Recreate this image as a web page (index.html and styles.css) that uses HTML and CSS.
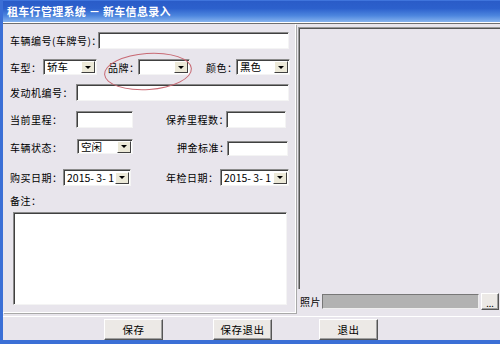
FILE: index.html
```html
<!DOCTYPE html>
<html>
<head>
    <meta charset="UTF-8">
    <title>新车信息录入</title>
    <link rel="stylesheet" href="styles.css">
</head>
<body>
    <div class="window">
        <div class="titlebar">租车行管理系统 － 新车信息录入</div>
        <div class="client">
            <div class="content">
                <div class="form-panel">
                    <div class="row row1">
                        <label class="w-plate">车辆编号(车牌号)：</label>
                        <div class="field w-191"></div>
                    </div>
                    <div class="row row2">
                        <label class="w-33">车型：</label>
                        <div class="combo w-54"><span>轿车</span><i class="arrow"></i></div>
                        <label class="w-30 ml-11">品牌：</label>
                        <div class="combo w-52"><span></span><i class="arrow"></i></div>
                        <label class="w-30 ml-16">颜色：</label>
                        <div class="combo w-54"><span>黑色</span><i class="arrow"></i></div>
                    </div>
                    <div class="row row3">
                        <label class="w-66">发动机编号：</label>
                        <div class="field w-213"></div>
                    </div>
                    <div class="row row4">
                        <label class="w-66">当前里程：</label>
                        <div class="field w-57"></div>
                        <label class="w-60 ml-33">保养里程数：</label>
                        <div class="field w-60"></div>
                    </div>
                    <div class="row row5">
                        <label class="w-67">车辆状态：</label>
                        <div class="combo w-56 up"><span>空闲</span><i class="arrow"></i></div>
                        <label class="w-50 ml-44">押金标准：</label>
                        <div class="field w-61 down"></div>
                    </div>
                    <div class="row row6">
                        <label class="w-53">购买日期：</label>
                        <div class="combo w-68"><span>2015- 3- 1</span><i class="arrow"></i></div>
                        <label class="w-54 ml-35">年检日期：</label>
                        <div class="combo w-69"><span>2015- 3- 1</span><i class="arrow"></i></div>
                    </div>
                    <div class="memo-label">备注：</div>
                    <div class="memo"></div>
                    <div class="highlight"></div>
                </div>
                <div class="photo-panel">
                    <div class="photo-box"></div>
                    <div class="photo-row">
                        <span class="photo-label">照片</span>
                        <div class="path"></div>
                        <div class="btn browse">...</div>
                    </div>
                </div>
            </div>
            <div class="button-bar">
                <div class="btn action">保存</div>
                <div class="btn action">保存退出</div>
                <div class="btn action">退出</div>
            </div>
        </div>
    </div>
</body>
</html>
```

FILE: styles.css
```css
body {
    margin: 0;
    font-family: "Noto Sans CJK SC", "DejaVu Sans", sans-serif;
    font-size: 10px;
    color: #000;
}
.window {
    width: 500px;
    height: 344px;
    overflow: hidden;
    background: #e8e5ec;
    border-left: 3px solid #3b6fd6;
    border-bottom: 4px solid #3b6fd6;
    box-sizing: border-box;
}
.titlebar {
    height: 22px;
    line-height: 21px;
    margin-left: -3px;
    padding-left: 7px;
    color: #fff;
    font-weight: bold;
    font-size: 11px;
    letter-spacing: 0.3px;
    background: linear-gradient(#2a5cc8 0%, #2c60cc 35%, #4d86de 70%, #86b3ee 100%);
    border-top: 1px solid #3f74dc;
    box-sizing: border-box;
}
.client {
    border-top: 1px solid #fff;
}
.content {
    display: flex;
    height: 293px;
    border-top: 1px solid #6e6e6e;
    box-sizing: border-box;
}
.form-panel {
    position: relative;
    flex: none;
    width: 293px;
    border-right: 1px solid #fff;
    border-bottom: 1px solid #fff;
    box-shadow: 1px 1px 0 #a8a8a8;
    margin-bottom: 3px;
    box-sizing: border-box;
    padding-left: 7px;
}
.row {
    display: flex;
    align-items: center;
}
.row label {
    flex: none;
    white-space: nowrap;
    letter-spacing: 0.5px;
}
.row1 { margin-top: 8px; height: 17px; }
.row2 { margin-top: 10px; height: 16px; }
.row3 { margin-top: 9px; height: 16px; }
.row4 { margin-top: 11px; height: 17px; }
.row5 { margin-top: 11px; height: 17px; }
.row6 { margin-top: 13px; height: 17px; }

.w-plate { width: 88px; }
.w-30 { width: 30px; }
.w-33 { width: 33px; }
.w-50 { width: 50px; }
.w-52 { width: 52px; }
.w-53 { width: 53px; }
.w-54 { width: 54px; }
.w-56 { width: 56px; }
.w-57 { width: 57px; }
.w-60 { width: 60px; }
.w-61 { width: 61px; }
.w-66 { width: 66px; }
.w-67 { width: 67px; }
.w-68 { width: 68px; }
.w-69 { width: 69px; }
.w-191 { width: 191px; }
.w-213 { width: 213px; }
.ml-11 { margin-left: 11px; }
.ml-16 { margin-left: 16px; }
.ml-33 { margin-left: 33px; }
.ml-35 { margin-left: 35px; }
.ml-44 { margin-left: 44px; }

.field, .combo, .memo {
    flex: none;
    box-sizing: border-box;
    background: #fff;
    border-top: 1px solid #8a8a8a;
    border-left: 1px solid #8a8a8a;
    border-right: 1px solid #f4f4f4;
    border-bottom: 1px solid #f4f4f4;
    box-shadow: inset 1px 1px 0 #404040;
}
.field { height: 17px; }
.combo {
    height: 16px;
    display: flex;
    align-items: center;
    justify-content: space-between;
    padding: 0 1px 0 3px;
}
.row6 .combo { height: 17px; }
.combo span {
    font-size: 10.5px;
    line-height: 14px;
    white-space: nowrap;
}
.up { align-self: flex-start; height: 15px; }
.down { align-self: flex-end; height: 15px; }
.arrow {
    width: 14px;
    height: 12px;
    box-sizing: border-box;
    background: #ece9d8;
    border-top: 1px solid #fff;
    border-left: 1px solid #fff;
    border-right: 1px solid #404040;
    border-bottom: 1px solid #404040;
    display: flex;
    align-items: center;
    justify-content: center;
}
.arrow::after {
    content: "";
    border-left: 3px solid transparent;
    border-right: 3px solid transparent;
    border-top: 3px solid #000;
}
.memo-label {
    margin-top: 9px;
    height: 12px;
    line-height: 12px;
    letter-spacing: 0.5px;
}
.memo {
    margin-top: 5px;
    margin-left: 3px;
    width: 274px;
    height: 93px;
}
.highlight {
    position: absolute;
    left: 101px;
    top: 29px;
    width: 86px;
    height: 35px;
    border: 1px solid #c86a74;
    border-radius: 50%;
    transform: rotate(-4deg);
}

.photo-panel {
    flex: none;
    width: 210px;
    margin-left: 2px;
}
.photo-box {
    margin-top: 3px;
    height: 262px;
    box-sizing: border-box;
    border-top: 1px solid #9a9a9a;
    border-left: 1px solid #9a9a9a;
    box-shadow: inset 1px 1px 0 #555;
}
.photo-row {
    display: flex;
    align-items: center;
    margin-top: 4px;
    height: 17px;
}
.photo-label {
    width: 24px;
    padding-left: 2px;
    box-sizing: border-box;
    letter-spacing: 0.5px;
}
.path {
    width: 157px;
    height: 15px;
    box-sizing: border-box;
    background: #b2b2b2;
    border-top: 1px solid #777;
    border-left: 1px solid #777;
    border-right: 1px solid #eee;
    border-bottom: 1px solid #eee;
}
.btn {
    box-sizing: border-box;
    background: #ece9e6;
    border-top: 1px solid #fff;
    border-left: 1px solid #fff;
    border-right: 1px solid #555;
    border-bottom: 1px solid #555;
    box-shadow: inset -1px -1px 0 #a0a0a0;
    display: flex;
    align-items: center;
    justify-content: center;
}
.browse {
    margin-left: 2px;
    width: 18px;
    height: 17px;
    font-size: 9px;
    line-height: 9px;
    padding-top: 3px;
}
.button-bar {
    display: flex;
    height: 23px;
    border-top: 1px solid #fff;
    box-sizing: border-box;
    padding-top: 2px;
    padding-left: 101px;
}
.action {
    width: 59px;
    height: 21px;
    margin-right: 50px;
    font-size: 10.5px;
    letter-spacing: 0.5px;
}
.action:nth-child(2) { margin-right: 47px; }
```
